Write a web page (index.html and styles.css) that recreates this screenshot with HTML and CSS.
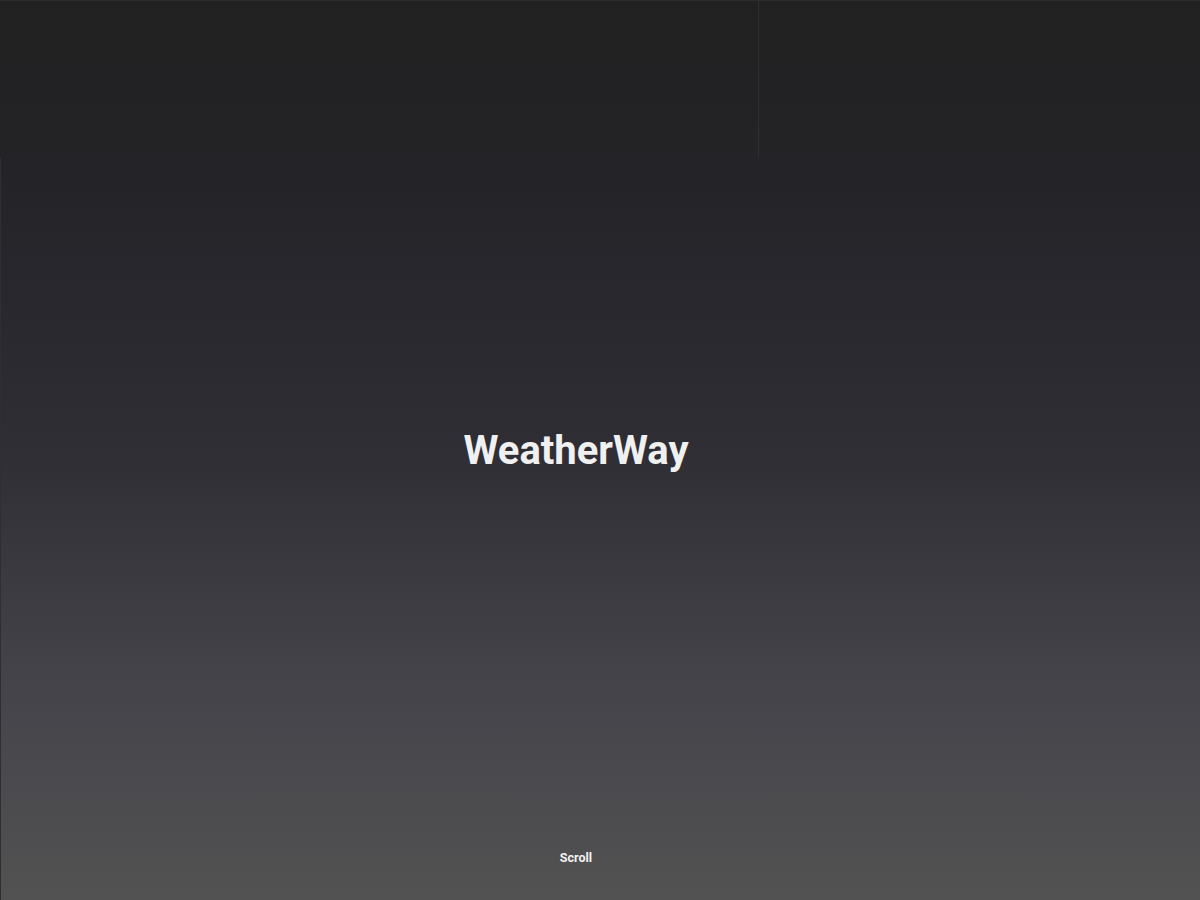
FILE: index.html
```html
<!DOCTYPE html>
<html lang="en">
<head>
<meta charset="utf-8">
<title>WeatherWay</title>
<link rel="stylesheet" href="styles.css">
</head>
<body>
<main class="hero">
  <div class="top-frame">
    <div class="top-left"></div>
    <div class="top-right"></div>
  </div>
  <div class="lower-frame"></div>
  <h1 class="title">WeatherWay</h1>
  <div class="scroll">Scroll</div>
</main>
</body>
</html>
```

FILE: styles.css
```css
html, body {
  margin: 0;
  padding: 0;
  height: 100%;
}
body {
  font-family: Roboto, "Liberation Sans", sans-serif;
  background: #212121;
}
.hero {
  position: relative;
  height: 900px;
  width: 1200px;
  overflow: hidden;
  background: linear-gradient(to bottom, #212121 0%, #25252a 25%, #2f2e35 50%, #44434a 75%, #525252 100%);
  display: flex;
  flex-direction: column;
  align-items: center;
  justify-content: center;
  padding-right: 48px;
  border-top: 1px solid #2c2c2c;
  box-sizing: border-box;
}
.top-frame {
  position: absolute;
  left: 0;
  top: 0;
  width: 1200px;
  height: 157px;
  display: flex;
}
.top-left {
  width: 758px;
  border-right: 1px solid #2e2e30;
}
.top-right {
  flex: 1;
}
.lower-frame {
  position: absolute;
  left: 0;
  top: 157px;
  bottom: 0;
  width: 0;
  border-left: 1px solid #2e2e33;
}
.title {
  margin: 0;
  font-size: 40px;
  font-weight: 700;
  color: #f0f0f0;
  letter-spacing: 0;
}
.scroll {
  position: absolute;
  left: 0;
  right: 48px;
  top: 849px;
  text-align: center;
  font-size: 12.5px;
  font-weight: 700;
  color: #f2f2f2;
}
```
